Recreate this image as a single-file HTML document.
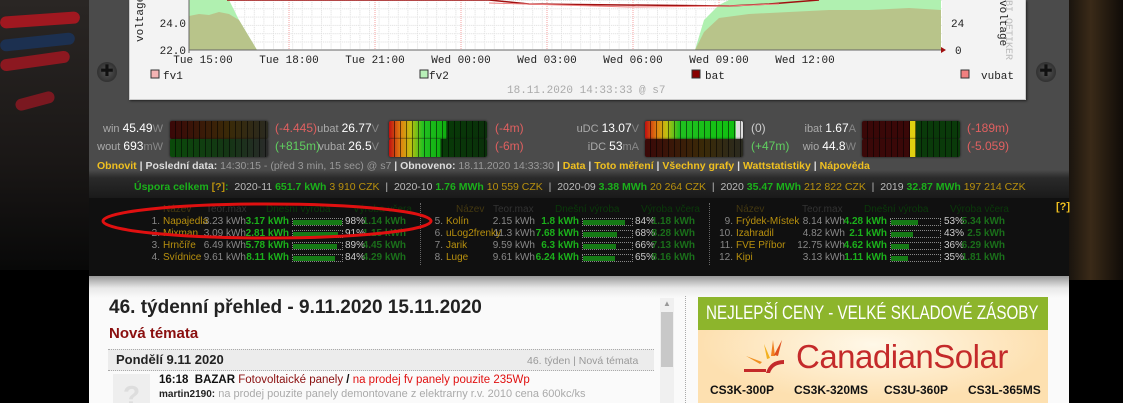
<!DOCTYPE html>
<html><head><meta charset="utf-8"><style>
*{margin:0;padding:0;box-sizing:border-box}
html,body{width:1123px;height:403px;overflow:hidden}
body{background:#000;position:relative;font-family:"Liberation Sans",sans-serif}
.a{position:absolute;white-space:nowrap}
.bar{position:absolute;height:18px;border-radius:2px;box-shadow:0 0 2px #111}
.g{font-size:11px;color:#aaa}
.g i{font-style:normal;font-size:12px;color:#fff}
.g u{text-decoration:none;color:#888}
.y{color:#b8900e}.gr{color:#1bb01b;font-weight:bold}.dg{color:#1a6e1a;font-weight:bold}.gy{color:#888}.lg{color:#ccc}
.c{position:absolute;font-size:10px;line-height:12px;white-space:nowrap}
.rt{text-align:right}
.pb{position:absolute;width:51px;height:8px;border:1px dotted #888}
.pb s{position:absolute;left:0;top:1px;height:5px;background:#157a15}
.h{position:absolute;top:204px;font-size:10px}
</style></head><body>
<div class="a" style="left:0;top:0;width:89px;height:270px;background:linear-gradient(180deg,#2a2624 0,#1a1716 60%,#080808 100%)"></div>
<div class="a" style="left:0;top:14px;width:80px;height:12px;background:#a01820;border-radius:6px;transform:rotate(-4deg)"></div>
<div class="a" style="left:0;top:36px;width:75px;height:12px;background:#1c3050;border-radius:6px;transform:rotate(-6deg)"></div>
<div class="a" style="left:0;top:55px;width:70px;height:12px;background:#8c1820;border-radius:6px;transform:rotate(-8deg)"></div>
<div class="a" style="left:15px;top:95px;width:40px;height:12px;background:#7a1820;border-radius:6px;transform:rotate(-15deg)"></div>
<div class="a" style="left:1069px;top:0;width:54px;height:280px;background:linear-gradient(90deg,#1a140e,#3a2a18 40%,#100c08)"></div>
<div class="a" style="left:89px;top:0;width:980px;height:178px;background:#4b4b4b"></div>
<div class="a" style="left:89px;top:170px;width:980px;height:8px;background:linear-gradient(#4b4b4b,#2a2a2a)"></div>
<div class="a" style="left:89px;top:178px;width:980px;height:20px;background:linear-gradient(#2a2a2a,#1a1a1a)"></div>
<div class="a" style="left:89px;top:198px;width:980px;height:78px;background:#101010"></div>
<div class="a" style="left:97px;top:62px;width:20px;height:20px;border-radius:50%;background:radial-gradient(#555,#222);color:#111;font-size:16px;text-align:center;line-height:20px">✚</div>
<div class="a" style="left:1036px;top:62px;width:20px;height:20px;border-radius:50%;background:radial-gradient(#555,#222);color:#111;font-size:16px;text-align:center;line-height:20px">✚</div>
<div class="a" style="left:129px;top:0;width:897px;height:100px;background:#f3f3f3;border:1px solid #ccc;border-top:none;box-shadow:1px 1px 2px #222"></div>
<svg class="a" style="left:129px;top:0" width="897" height="100">
<defs><pattern id="gp" width="9.6" height="8.3" patternUnits="userSpaceOnUse"><path d="M0 .5H9.6M.5 0V8.3" stroke="#ddd" stroke-width="1" stroke-dasharray="1 1"/></pattern></defs>
<rect x="60" y="0" width="753" height="50" fill="#fff"/>
<rect x="60" y="0" width="753" height="50" fill="url(#gp)"/>
<g stroke="#f4a0a0" stroke-dasharray="1 1"><path d="M74 0V50M160 0V50M246 0V50M332 0V50M418 0V50M504 0V50M590 0V50M676 0V50M762 0V50"/></g>
<path d="M60 0H100L110 20L125 45L128 50H60Z" fill="#b0f0b0"/>
<path d="M60 16L70 14L80 15L90 12L100 14L110 20L125 45L128 50H60Z" fill="#b8c48a"/>
<path d="M566 50L575 20L590 5L600 0H812V50Z" fill="#b0f0b0"/>
<path d="M566 50L575 32L590 18L620 14L660 12L700 10L740 10L780 8L812 10V50Z" fill="#b8c48a"/>
<path d="M98 0H360L400 4L600 6L640 4L690 0" stroke="#a01010" stroke-width="1.5" fill="none"/>
<path d="M360 3L500 7L600 6L650 4" stroke="#f08080" stroke-width="1" fill="none"/>
<path d="M60 50H815" stroke="#666"/><path d="M60 0V53" stroke="#666"/>
<path d="M812 47L817 50L812 53Z" fill="#a01010"/>
<g font-family="Liberation Mono" font-size="11" fill="#222">
<text x="57" y="27" text-anchor="end">24.0</text><text x="57" y="54" text-anchor="end">22.0</text>
<g text-anchor="middle"><text x="74" y="63">Tue 15:00</text><text x="160" y="63">Tue 18:00</text><text x="246" y="63">Tue 21:00</text><text x="332" y="63">Wed 00:00</text><text x="418" y="63">Wed 03:00</text><text x="504" y="63">Wed 06:00</text><text x="590" y="63">Wed 09:00</text><text x="676" y="63">Wed 12:00</text></g>
<text x="822" y="27">24</text><text x="826" y="54">0</text>
<text x="34" y="79">fv1</text><text x="300" y="79">fv2</text><text x="576" y="79">bat</text><text x="852" y="79">vubat</text>
<text x="378" y="93" fill="#aaa">18.11.2020 14:33:33 @ s7</text>
</g>
<text font-family="Liberation Mono" font-size="11" fill="#222" transform="translate(871,0) rotate(90)">voltage</text>
<text font-family="Liberation Mono" font-size="10" fill="#bbb" transform="translate(877,0) rotate(90)">BI OETIKER</text>
<text font-family="Liberation Mono" font-size="11" fill="#222" transform="translate(14,42) rotate(-90)">voltage</text>
<rect x="22" y="70" width="8" height="8" fill="#f4b4b4" stroke="#333"/>
<rect x="291" y="70" width="8" height="8" fill="#b8f0b8" stroke="#333"/>
<rect x="563" y="70" width="8" height="8" fill="#800" stroke="#333"/>
<rect x="832" y="70" width="8" height="8" fill="#f08080" stroke="#333"/>
</svg>
<!-- gauges -->
<div class="a g" style="right:960px;top:121px">win <i>45.49</i><u>W</u></div>
<div class="bar" style="left:170px;top:121px;width:98px;background-image:repeating-linear-gradient(90deg,transparent 0 5px,rgba(0,0,0,.55) 5px 6px),linear-gradient(90deg,#3a0808,#3a2a08 60%,#2a2a20)"></div>
<div class="a" style="left:275px;top:121px;font-size:12px;color:#e06060">(-4.445)</div>
<div class="a g" style="right:960px;top:139px">wout <i>693</i><u>mW</u></div>
<div class="bar" style="left:170px;top:139px;width:98px;background-image:repeating-linear-gradient(90deg,transparent 0 5px,rgba(0,0,0,.55) 5px 6px),linear-gradient(90deg,#0a4a0a,#153515 60%,#2a2a2a)"></div>
<div class="a" style="left:275px;top:139px;font-size:12px;color:#60d060">(+815m)</div>
<div class="a g" style="right:744px;top:121px">ubat <i>26.77</i><u>V</u></div>
<div class="bar" style="left:389px;top:121px;width:98px;background-image:repeating-linear-gradient(90deg,transparent 0 5px,rgba(0,0,0,.55) 5px 6px),linear-gradient(90deg,#c01010,#e08010 12%,#c0c010 22%,#20c020 35%,#10b010 58%,#083a08 59%,#0a300a)"></div>
<div class="a" style="left:495px;top:121px;font-size:12px;color:#e06060">(-4m)</div>
<div class="a g" style="right:744px;top:139px">vubat <i>26.5</i><u>V</u></div>
<div class="bar" style="left:389px;top:139px;width:98px;background-image:repeating-linear-gradient(90deg,transparent 0 5px,rgba(0,0,0,.55) 5px 6px),linear-gradient(90deg,#c01010,#e08010 12%,#c0c010 22%,#20c020 35%,#10b010 52%,#083a08 53%,#0a300a)"></div>
<div class="a" style="left:495px;top:139px;font-size:12px;color:#e06060">(-6m)</div>
<div class="a g" style="right:484px;top:121px">uDC <i>13.07</i><u>V</u></div>
<div class="bar" style="left:645px;top:121px;width:98px;background-image:repeating-linear-gradient(90deg,transparent 0 5px,rgba(0,0,0,.55) 5px 6px),linear-gradient(90deg,#c01010,#e08010 12%,#c0c010 22%,#20c020 35%,#10c010 92%,#ddd 93%)"></div>
<div class="a" style="left:751px;top:121px;font-size:12px;color:#ccc">(0)</div>
<div class="a g" style="right:484px;top:139px">iDC <i>53</i><u>mA</u></div>
<div class="bar" style="left:645px;top:139px;width:98px;background-image:repeating-linear-gradient(90deg,transparent 0 5px,rgba(0,0,0,.55) 5px 6px),linear-gradient(90deg,#3a0808,#3a2a08 60%,#2a2a20)"></div>
<div class="a" style="left:751px;top:139px;font-size:12px;color:#60d060">(+47m)</div>
<div class="a g" style="right:267px;top:121px">ibat <i>1.67</i><u>A</u></div>
<div class="bar" style="left:862px;top:121px;width:98px;background-image:repeating-linear-gradient(90deg,transparent 0 5px,rgba(0,0,0,.55) 5px 6px),linear-gradient(90deg,#3a0808 49%,#e0d010 49% 55%,#0a3a0a 55%)"></div>
<div class="a" style="left:967px;top:121px;font-size:12px;color:#e06060">(-189m)</div>
<div class="a g" style="right:267px;top:139px">wio <i>44.8</i><u>W</u></div>
<div class="bar" style="left:862px;top:139px;width:98px;background-image:repeating-linear-gradient(90deg,transparent 0 5px,rgba(0,0,0,.55) 5px 6px),linear-gradient(90deg,#3a0808 49%,#e0d010 49% 55%,#0a3a0a 55%)"></div>
<div class="a" style="left:967px;top:139px;font-size:12px;color:#e06060">(-5.059)</div>
<div class="a" style="left:97px;top:160px;font-size:10.5px;font-weight:bold;color:#ddd"><span style="color:#f0c020">Obnovit</span> | Poslední data: <span style="color:#999;font-weight:normal">14:30:15 - (před 3 min, 15 sec) @ s7</span> | Obnoveno: <span style="color:#999;font-weight:normal">18.11.2020 14:33:30</span> | <span style="color:#f0c020">Data</span> | <span style="color:#f0c020">Toto měření</span> | <span style="color:#f0c020">Všechny grafy</span> | <span style="color:#f0c020">Wattstatistiky</span> | <span style="color:#f0c020">Nápověda</span></div>
<div class="a" style="left:134px;top:181px;font-size:10.5px;color:#bbb"><b style="color:#1bb01b">Úspora celkem <span style="color:#b8900e">[?]</span>:</b>&nbsp; 2020-11 <span class="gr">651.7 kWh</span> <span class="y">3 910 CZK</span> &nbsp;| &nbsp;2020-10 <span class="gr">1.76 MWh</span> <span class="y">10 559 CZK</span> &nbsp;| &nbsp;2020-09 <span class="gr">3.38 MWh</span> <span class="y">20 264 CZK</span> &nbsp;| &nbsp;2020 <span class="gr">35.47 MWh</span> <span class="y">212 822 CZK</span> &nbsp;| &nbsp;2019 <span class="gr">32.87 MWh</span> <span class="y">197 214 CZK</span></div>
<!-- table -->
<div class="a" style="left:420px;top:203px;height:62px;border-left:1px dotted #666"></div>
<div class="a" style="left:709px;top:203px;height:62px;border-left:1px dotted #666"></div>
<div class="h" style="left:163px;color:#443810">Název</div><div class="h" style="left:206px;color:#333">Teor.max</div><div class="h" style="left:266px;color:#0a3a0a">Dnešní výroba</div><div class="h" style="left:353px;color:#0a3a0a">Výroba včera</div>
<div class="h" style="left:456px;color:#443810">Název</div><div class="h" style="left:493px;color:#333">Teor.max</div><div class="h" style="left:555px;color:#0a3a0a">Dnešní výroba</div><div class="h" style="left:641px;color:#0a3a0a">Výroba včera</div>
<div class="h" style="left:736px;color:#443810">Název</div><div class="h" style="left:802px;color:#333">Teor.max</div><div class="h" style="left:864px;color:#0a3a0a">Dnešní výroba</div><div class="h" style="left:950px;color:#0a3a0a">Výroba včera</div>
<!-- T1 -->
<div class="c rt gy" style="left:130px;width:30px;top:216px">1.<br>2.<br>3.<br>4.</div>
<div class="c y" style="left:163px;top:216px">Napajedla<br>Mixman<br>Hrnčíře<br>Svídnice</div>
<div class="c rt gy" style="left:196px;width:50px;top:216px">3.23 kWh<br>3.09 kWh<br>6.49 kWh<br>9.61 kWh</div>
<div class="c rt gr" style="left:240px;width:49px;top:216px">3.17 kWh<br>2.81 kWh<br>5.78 kWh<br>8.11 kWh</div>
<div class="pb" style="left:292px;top:218px"><s style="width:49px"></s></div><div class="pb" style="left:292px;top:230px"><s style="width:45px"></s></div><div class="pb" style="left:292px;top:242px"><s style="width:44px"></s></div><div class="pb" style="left:292px;top:254px"><s style="width:42px"></s></div>
<div class="c lg" style="left:345px;top:216px">98%<br>91%<br>89%<br>84%</div>
<div class="c rt dg" style="left:356px;width:50px;top:216px">1.14 kWh<br>1.15 kWh<br>4.45 kWh<br>4.29 kWh</div>
<!-- T2 -->
<div class="c rt gy" style="left:413px;width:30px;top:216px">5.<br>6.<br>7.<br>8.</div>
<div class="c y" style="left:446px;top:216px">Kolín<br>uLog2frenky<br>Jarik<br>Luge</div>
<div class="c rt gy" style="left:485px;width:50px;top:216px">2.15 kWh<br>11.3 kWh<br>9.59 kWh<br>9.61 kWh</div>
<div class="c rt gr" style="left:530px;width:49px;top:216px">1.8 kWh<br>7.68 kWh<br>6.3 kWh<br>6.24 kWh</div>
<div class="pb" style="left:582px;top:218px"><s style="width:42px"></s></div><div class="pb" style="left:582px;top:230px"><s style="width:34px"></s></div><div class="pb" style="left:582px;top:242px"><s style="width:33px"></s></div><div class="pb" style="left:582px;top:254px"><s style="width:32px"></s></div>
<div class="c lg" style="left:635px;top:216px">84%<br>68%<br>66%<br>65%</div>
<div class="c rt dg" style="left:645px;width:50px;top:216px">1.18 kWh<br>8.28 kWh<br>7.13 kWh<br>8.16 kWh</div>
<!-- T3 -->
<div class="c rt gy" style="left:703px;width:30px;top:216px">9.<br>10.<br>11.<br>12.</div>
<div class="c y" style="left:736px;top:216px">Frýdek-Místek<br>Izahradil<br>FVE Příbor<br>Kipi</div>
<div class="c rt gy" style="left:785px;width:60px;top:216px">8.14 kWh<br>4.82 kWh<br>12.75 kWh<br>3.13 kWh</div>
<div class="c rt gr" style="left:838px;width:49px;top:216px">4.28 kWh<br>2.1 kWh<br>4.62 kWh<br>1.11 kWh</div>
<div class="pb" style="left:890px;top:218px"><s style="width:27px"></s></div><div class="pb" style="left:890px;top:230px"><s style="width:22px"></s></div><div class="pb" style="left:890px;top:242px"><s style="width:18px"></s></div><div class="pb" style="left:890px;top:254px"><s style="width:17px"></s></div>
<div class="c lg" style="left:944px;top:216px">53%<br>43%<br>36%<br>35%</div>
<div class="c rt dg" style="left:955px;width:50px;top:216px">5.34 kWh<br>2.5 kWh<br>6.29 kWh<br>1.81 kWh</div>
<div class="a" style="left:1056px;top:201px;font-size:11px;font-weight:bold;color:#f0c020">[?]</div>
<svg class="a" style="left:100px;top:200px" width="340" height="45"><ellipse cx="167" cy="21" rx="164" ry="17" fill="none" stroke="#e01010" stroke-width="3"/></svg>
<!-- content -->
<div class="a" style="left:89px;top:276px;width:980px;height:127px;background:linear-gradient(#999 0,#e8e8e8 12px,#fafafa 22px)"></div>
<div class="a" style="left:109px;top:297px;font-size:19px;font-weight:bold;color:#222">46. týdenní přehled - 9.11.2020 15.11.2020</div>
<div class="a" style="left:109px;top:325px;font-size:15px;font-weight:bold;color:#8a0f0f">Nová témata</div>
<div class="a" style="left:108px;top:349px;width:546px;height:22px;background:#ececec;border-top:1px dotted #aaa;border-bottom:1px dotted #aaa"></div>
<div class="a" style="left:116px;top:352px;font-size:13px;color:#222;font-weight:bold">Pondělí 9.11 2020</div>
<div class="a" style="left:527px;top:355px;font-size:10.5px;color:#999">46. týden | Nová témata</div>
<div class="a" style="left:113px;top:374px;width:37px;height:29px;background:#eee;color:#ddd;font-size:28px;font-weight:bold;text-align:center;line-height:44px">?</div>
<div class="a" style="left:159px;top:374px;font-size:11.5px;font-weight:bold;color:#111">16:18&nbsp; BAZAR <span style="color:#8a0f0f;font-weight:normal">Fotovoltaické panely</span> / <span style="color:#e01010;font-weight:normal">na prodej fv panely pouzite 235Wp</span></div>
<div class="a" style="left:159px;top:388px;font-size:11px;color:#aaa"><b style="color:#222;font-size:10px">martin2190:</b> na prodej pouzite panely demontovane z elektrarny r.v. 2010 cena 600kc/ks</div>
<div class="a" style="left:660px;top:298px;width:14px;height:105px;background:#f0f0f0"></div>
<div class="a" style="left:661px;top:312px;width:12px;height:55px;background:#c8c8c8"></div>
<div class="a" style="left:663px;top:299px;font-size:8px;color:#999">▲</div>
<div class="a" style="left:685px;top:296px;height:107px;border-left:1px dotted #aaa"></div>
<div class="a" style="left:698px;top:297px;width:350px;height:33px;background:#8db52c;overflow:hidden"><div style="color:#fff;font-size:19px;line-height:33px;width:420px;transform:scaleX(.8);transform-origin:8px 0;padding-left:8px">NEJLEPŠÍ CENY - VELKÉ SKLADOVÉ ZÁSOBY</div></div>
<div class="a" style="left:698px;top:330px;width:350px;height:73px;background:radial-gradient(ellipse at 50% 20%,#fff8e8,#fde0b0 70%)"></div>
<svg class="a" style="left:740px;top:336px" width="70" height="40">
<path d="M24 8L30 22L27 23Z" fill="#f2b020"/><path d="M33 4L35 20L31 20Z" fill="#f08020"/><path d="M42 4L38 20L34 19Z" fill="#e05020"/><path d="M6 20L22 26L20 28Z" fill="#f09020"/>
<path d="M4 33H26V36H4Z" fill="#c42a2a"/><path d="M26 37Q30 24 44 24L44 28Q33 28 30 37Z" fill="#c42a2a"/></svg>
<div class="a" style="left:796px;top:338px;font-size:33px;color:#c42a2a;letter-spacing:-0.5px">CanadianSolar</div>
<div class="a" style="left:710px;top:383px;font-size:12px;font-weight:bold;color:#111">CS3K-300P</div>
<div class="a" style="left:794px;top:383px;font-size:12px;font-weight:bold;color:#111">CS3K-320MS</div>
<div class="a" style="left:884px;top:383px;font-size:12px;font-weight:bold;color:#111">CS3U-360P</div>
<div class="a" style="left:968px;top:383px;font-size:12px;font-weight:bold;color:#111">CS3L-365MS</div>
</body></html>
